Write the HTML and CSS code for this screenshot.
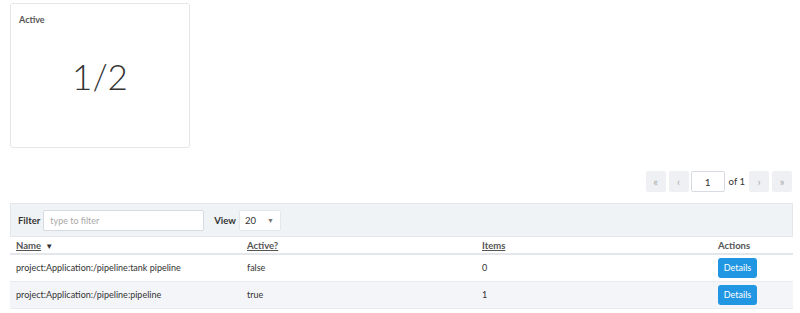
FILE: index.html
```html
<!DOCTYPE html>
<html lang="en">
<head>
  <meta charset="UTF-8">
  <title>Pipelines</title>
  <link rel="stylesheet" href="styles.css">
</head>
<body>
  <!-- Summary card -->
  <div class="stat-card">
    <div class="stat-title">Active</div>
    <div class="stat-value">1/2</div>
  </div>

  <!-- Pager -->
  <div class="pager">
    <button class="page-btn">&laquo;</button>
    <button class="page-btn">&lsaquo;</button>
    <input class="page-input" type="text" value="1">
    <span class="page-of">of 1</span>
    <button class="page-btn">&rsaquo;</button>
    <button class="page-btn">&raquo;</button>
  </div>

  <!-- Filter bar -->
  <div class="filter-bar">
    <label class="filter-label">Filter</label>
    <input class="filter-input" type="text" placeholder="type to filter">
    <label class="filter-label view-label">View</label>
    <div class="view-select">20 <span class="caret">&#9660;</span></div>
  </div>

  <table class="pipe-table">
    <thead>
      <tr>
        <th class="col-name"><a href="#">Name</a> <span class="sort">&#9660;</span></th>
        <th class="col-active"><a href="#">Active?</a></th>
        <th class="col-items"><a href="#">Items</a></th>
        <th class="col-actions">Actions</th>
      </tr>
    </thead>
    <tbody>
      <tr>
        <td>project:Application:/pipeline:tank pipeline</td>
        <td>false</td>
        <td>0</td>
        <td class="col-actions"><button class="details-btn">Details</button></td>
      </tr>
      <tr class="alt">
        <td>project:Application:/pipeline:pipeline</td>
        <td>true</td>
        <td>1</td>
        <td class="col-actions"><button class="details-btn">Details</button></td>
      </tr>
    </tbody>
  </table>
</body>
</html>
```

FILE: styles.css
```css
/* General Reset */
* {
  margin: 0;
  padding: 0;
  box-sizing: border-box;
}

body {
  font-family: Lato, "Open Sans", sans-serif;
  font-size: 9px;
  color: #333;
  background: #fff;
  padding: 3px 7px 0 10px;
}

/* Summary card */
.stat-card {
  width: 180px;
  height: 145px;
  border: 1px solid #e3e7ec;
  border-radius: 3px;
  padding: 10px 8px;
  display: flex;
  flex-direction: column;
}

.stat-title {
  font-weight: bold;
  font-size: 9px;
  color: #555;
}

.stat-value {
  flex: 1;
  display: flex;
  justify-content: center;
  align-items: center;
  font-size: 35px;
  font-weight: 300;
  color: #333;
  padding-bottom: 10px;
}

/* Pager */
.pager {
  display: flex;
  justify-content: flex-end;
  align-items: center;
  gap: 3px;
  margin-top: 23px;
  padding-right: 1px;
}

.page-btn {
  width: 20px;
  height: 21px;
  border: none;
  border-radius: 2px;
  background: #eef0f3;
  color: #aaa;
  font-size: 11px;
  font-family: inherit;
}

.page-input {
  width: 34px;
  height: 21px;
  border: 1px solid #d5dbe1;
  border-radius: 2px;
  text-align: center;
  font-family: inherit;
  font-size: 10px;
  color: #333;
  margin-left: -1px;
}

.page-of {
  font-size: 9.5px;
  margin: 0 1px;
}

/* Filter bar */
.filter-bar {
  display: flex;
  align-items: center;
  margin-top: 11px;
  height: 34px;
  background: #f0f3f6;
  border: 1px solid #e3e7ec;
  padding: 0 6px 0 7px;
}

.filter-label {
  font-weight: bold;
  font-size: 9.5px;
  color: #333;
  margin-right: 3px;
}

.view-label {
  margin-left: 10px;
}

.filter-input {
  width: 161px;
  height: 21px;
  border: 1px solid #d5dbe1;
  border-radius: 2px;
  background: #fff;
  padding: 0 6px;
  font-family: inherit;
  font-size: 9px;
}

.filter-input::placeholder {
  color: #aaa;
}

.view-select {
  width: 42px;
  height: 21px;
  background: #fff;
  border: 1px solid #e3e7ec;
  border-radius: 2px;
  display: flex;
  align-items: center;
  justify-content: space-between;
  padding: 0 6px 0 5px;
  font-size: 9.5px;
}

.caret {
  font-size: 7px;
  color: #777;
}

/* Table */
.pipe-table {
  width: 783px;
  border-collapse: collapse;
  table-layout: fixed;
}

.pipe-table th {
  text-align: left;
  font-weight: bold;
  font-size: 9.5px;
  color: #555;
  height: 17px;
  padding: 0 6px;
  border-bottom: 2px solid #e3e7ec;
}

.pipe-table th a {
  color: #555;
}

.sort {
  font-size: 8px;
  color: #333;
  margin-left: 2px;
}

.col-name { width: 231px; }
.col-active { width: 235px; }
.col-items { width: 235px; }
.pipe-table .col-actions {
  text-align: left;
  padding-left: 7px;
}

.pipe-table td {
  height: 27px;
  padding: 0 6px;
  border-bottom: 1px solid #e8ebef;
  font-size: 9px;
  color: #333;
}

.pipe-table tr.alt td {
  background: #f3f5f8;
}

.details-btn {
  background: #2196e3;
  color: #fff;
  border: none;
  border-radius: 3px;
  height: 20px;
  width: 39px;
  font-family: inherit;
  font-size: 9px;
}
```
